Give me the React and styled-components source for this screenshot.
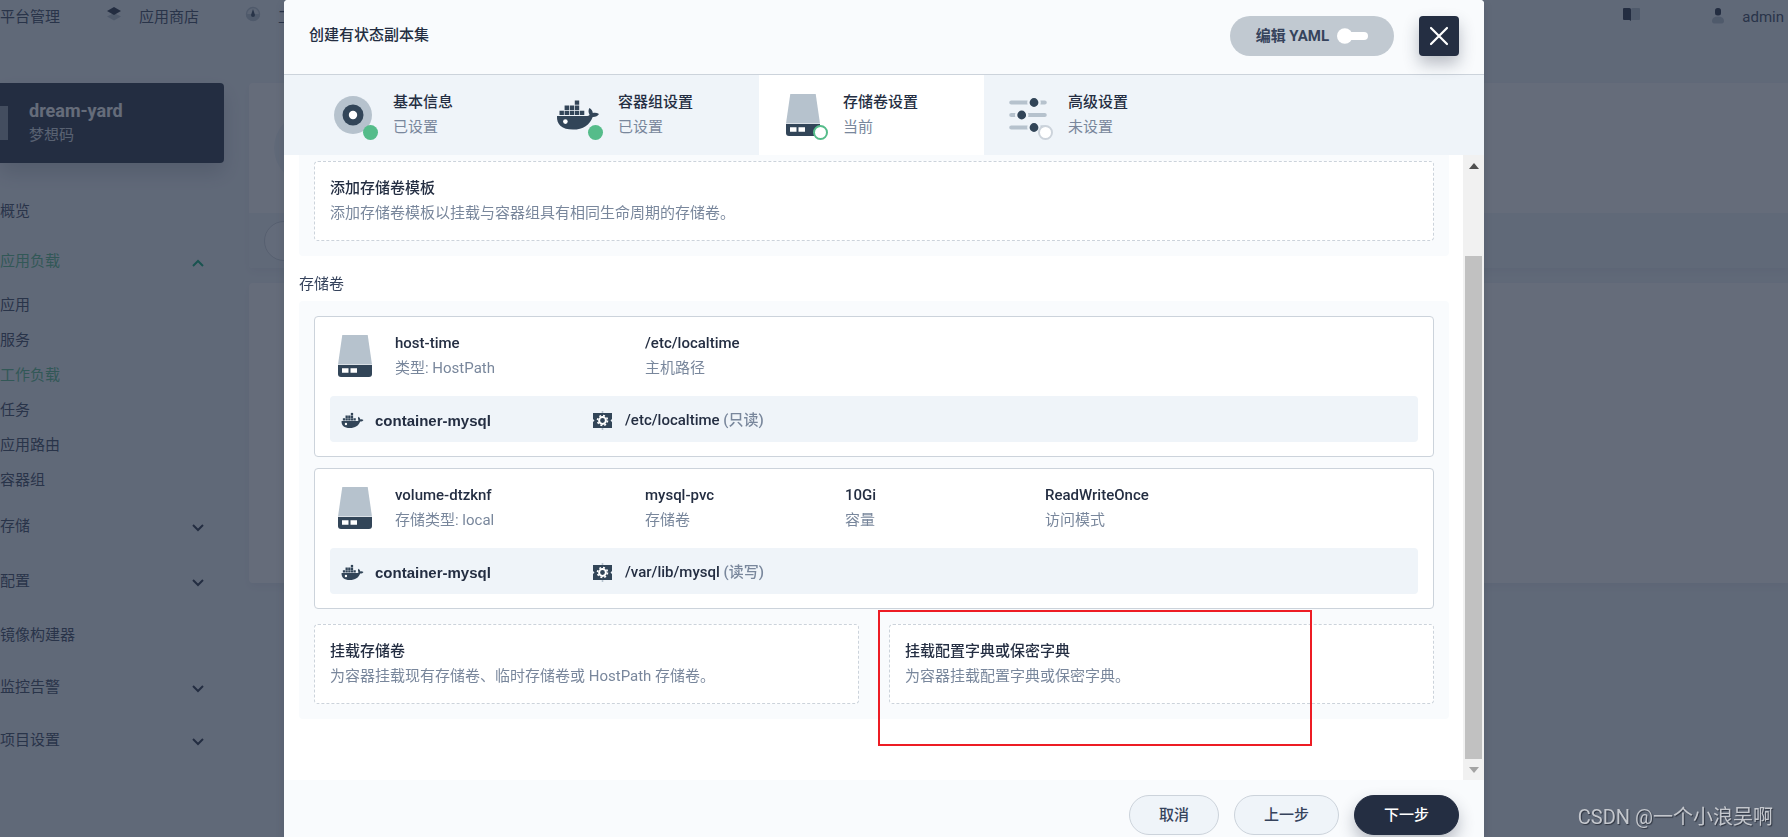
import React from 'react';
import styled, { createGlobalStyle, css } from 'styled-components';

const GlobalStyle = createGlobalStyle`
  * {
    box-sizing: border-box;
  }
  body {
    margin: 0;
    overflow: hidden;
    background: #eff4f9;
    color: #36435c;
    font-family: Roboto, "Noto Sans CJK SC", sans-serif;
    font-size: 15px;
    line-height: 25px;
  }
  button {
    font: inherit;
    color: inherit;
    border: 0;
    margin: 0;
    padding: 0;
    background: none;
    cursor: pointer;
  }
  a {
    color: inherit;
    text-decoration: none;
  }
  h2, h3, p {
    margin: 0;
    font-size: 15px;
  }
`

// PAGE BEHIND THE MODAL -------------------------------------------------------
const Page = styled.div`
  height: 100vh;
  overflow: hidden;
`

const TopNav = styled.nav`
  display: flex;
  align-items: flex-start;
  height: 57px;
  padding: 5px 4px 0 0;
`

const NavGroup = styled.div`
  display: flex;
  flex: ${props => props.$grow ? 1 : 'none'};
  gap: ${props => props.$gap}px;
`

const NavLink = styled.a`
  display: flex;
  gap: 17px;
  white-space: nowrap;

  svg {
    margin-top: 1px;
  }
`

const Shell = styled.div`
  display: flex;
  gap: 25px;
  padding-top: 26px;
`

const Sidebar = styled.aside`
  flex: none;
  width: 224px;
`

const Project = styled.div`
  display: flex;
  align-items: center;
  gap: 21px;
  height: 80px;
  margin-bottom: 23px;
  border-radius: 0 4px 4px 0;
  background: #242e42;
  box-shadow: 0 10px 20px rgba(36, 46, 66, 0.2);
  color: #ffffff;
`

const ProjectMark = styled.span`
  width: 8px;
  height: 34px;
  background: #8d96a3;
`

const ProjectName = styled.strong`
  display: block;
  font-size: 18px;
`

const ProjectAlias = styled.span`
  color: #d8dee5;
`

const MenuItem = styled.a`
  display: flex;
  align-items: center;
  justify-content: space-between;
  height: ${props => props.$height}px;
  padding-right: 20px;
  color: ${props => props.$active ? '#55bc8a' : '#36435c'};

  svg {
    margin-top: 3px;
  }
`

const SubMenu = styled.div`
  padding: 2px 0 1px;
`

const Main = styled.main`
  flex: 1;
`

const Panel = styled.section`
  height: ${props => props.$height}px;
  margin-bottom: 15px;
  overflow: hidden;
  border-radius: 4px 0 0 4px;
  background: #ffffff;
  box-shadow: 0 4px 8px rgba(36, 46, 66, 0.06);
`

const PanelHead = styled.div`
  display: flex;
  align-items: center;
  height: 130px;
  padding-left: 25px;
`

const PanelAvatar = styled.span`
  width: 72px;
  height: 72px;
  border-radius: 50%;
  background: #eff4f9;
`

const PanelBar = styled.div`
  display: flex;
  align-items: center;
  height: 55px;
  padding-left: 15px;
  background: #eff4f9;
`

const PanelPill = styled.span`
  width: 100px;
  height: 40px;
  border: 1px solid #ccd3db;
  border-radius: 20px;
  background: #f9fbfd;
`

// MODAL -----------------------------------------------------------------------
const Overlay = styled.div`
  position: fixed;
  inset: 0;
  display: flex;
  justify-content: center;
  padding-right: 20px;
  background: rgba(36, 46, 66, 0.7);
`

const Modal = styled.div`
  display: flex;
  flex-direction: column;
  width: 100%;
  max-width: 1200px;
  height: 100%;
  border-radius: 4px 4px 0 0;
  overflow: hidden;
  background: #ffffff;
  box-shadow: 0 4px 8px rgba(36, 46, 66, 0.2);
`

const Header = styled.header`
  display: flex;
  align-items: center;
  gap: 25px;
  flex: none;
  padding: 16px 25px 18px;
  border-bottom: 1px solid #ccd3db;
  background: #f9fbfd;
`

const Title = styled.h2`
  flex: 1;
  padding-bottom: 2px;
  color: #242e42;
  font-weight: 500;
`

const YamlButton = styled.button`
  display: flex;
  align-items: center;
  gap: 8px;
  height: 40px;
  padding: 0 26px;
  border-radius: 20px;
  background: #c1c9d1;
  font-weight: 700;
`

const CloseButton = styled.button`
  display: flex;
  align-items: center;
  justify-content: center;
  width: 40px;
  height: 40px;
  border-radius: 4px;
  background: #242e42;
  box-shadow: 0 8px 16px rgba(36, 46, 66, 0.3);
  z-index: 1;
`

const Steps = styled.div`
  display: flex;
  flex: none;
  padding: 0 25px;
  background: #eff4f9;
`

const Step = styled.button`
  display: flex;
  align-items: center;
  gap: 16px;
  width: 225px;
  height: 80px;
  padding: 0 20px;
  text-align: left;
  background: ${props => props.$current ? '#ffffff' : 'transparent'};
`

const StepIcon = styled.span`
  position: relative;
  display: flex;
`

const dotStyles = {
  done: css`background: #55bc8a;`,
  current: css`background: #ffffff; border: 2px solid #55bc8a;`,
  pending: css`background: #ffffff; border: 2px solid #ccd3db;`,
}

const StatusDot = styled.span`
  position: absolute;
  right: -1px;
  bottom: -1px;
  width: 15px;
  height: 15px;
  border-radius: 50%;
  ${props => dotStyles[props.$status]}
`

const Name = styled.strong`
  display: block;
  color: #242e42;
  font-weight: 500;
  white-space: nowrap;
`

const Desc = styled.span`
  display: block;
  color: #79879c;
  white-space: nowrap;
`

const Body = styled.div`
  display: flex;
  flex: 1;
  min-height: 0;
`

const Content = styled.div`
  flex: 1;
  overflow: hidden;
  padding: 0 14px 0 15px;
`

const Group = styled.section`
  display: flex;
  flex-direction: column;
  gap: 11px;
  padding: ${props => props.$cut ? '6px 15px 15px' : '15px'};
  border-radius: ${props => props.$cut ? '0 0 4px 4px' : '4px'};
  background: #f9fbfd;
`

const GroupTitle = styled.h3`
  margin: 16px 0 4px;
  font-weight: 400;
`

const AddRow = styled.div`
  display: flex;
  gap: 30px;
  padding-top: ${props => props.$spaced ? 4 : 0}px;
`

const AddBox = styled.button`
  position: relative;
  flex: 1;
  height: 80px;
  padding: 0 15px;
  border: 1px dashed #ccd3db;
  border-radius: 4px;
  background: #ffffff;
  text-align: left;
`

const Highlight = styled.span`
  position: absolute;
  top: -15px;
  left: -12px;
  width: 434px;
  height: 136px;
  border: 2px solid #ed1c24;
  pointer-events: none;
`

const VolumeCard = styled.article`
  padding: 14px 15px;
  border: 1px solid #ccd3db;
  border-radius: 4px;
  background: #ffffff;
`

const VolumeInfo = styled.div`
  display: flex;
  align-items: center;
  height: 50px;
  margin-bottom: 15px;

  svg {
    margin: 0 16px 0 1px;
  }
`

const Field = styled.div`
  width: ${props => props.$wide ? 250 : 200}px;
`

const MountRow = styled.div`
  display: flex;
  align-items: center;
  height: 46px;
  padding: 2px 10px 0;
  border-radius: 4px;
  background: #eff4f9;
`

const Mount = styled.div`
  display: flex;
  align-items: center;
  gap: 10px;
  width: 250px;
  color: #242e42;
  font-weight: 500;
  white-space: nowrap;

  em {
    color: #79879c;
    font-style: normal;
  }
`

const ContainerName = styled.span`
  font-family: "Liberation Sans", "Noto Sans CJK SC", sans-serif;
  font-weight: 700;
`

const ScrollBar = styled.div`
  display: flex;
  flex-direction: column;
  flex: none;
  width: 21px;
  padding: 0 2px;
  background: #f1f1f1;
`

const ScrollArrow = styled.span`
  display: flex;
  align-items: center;
  justify-content: center;
  height: 21px;
`

const ScrollThumb = styled.span`
  flex: 1;
  margin-top: ${props => props.$offset}px;
  background: #c1c1c1;
`

const Footer = styled.footer`
  display: flex;
  justify-content: flex-end;
  gap: 15px;
  flex: none;
  padding: 15px 25px 2px;
  background: #f9fbfd;
`

const FooterButton = styled.button`
  width: ${props => props.$wide ? 105 : 90}px;
  height: 40px;
  border: 1px solid ${props => props.$primary ? '#242e42' : '#ccd3db'};
  border-radius: 20px;
  background: ${props => props.$primary ? '#242e42' : '#eff4f9'};
  color: ${props => props.$primary ? '#ffffff' : '#36435c'};
  font-weight: 500;
  ${props => props.$primary && css`
    box-shadow: 0 8px 16px rgba(36, 46, 66, 0.3);
  `}
`

const Watermark = styled.span`
  position: fixed;
  right: 15px;
  bottom: 7px;
  color: #c4c7cd;
  font-size: 20px;
  text-shadow: 1px 1px 1px #2e3440;
`

// ICONS -----------------------------------------------------------------------
const DARK = '#324558';
const LIGHT = '#b6c2cd';

const DiscIcon = () => (
  <svg width="48" height="48" viewBox="0 0 48 48">
    <circle cx="24" cy="24" r="19" fill={LIGHT} />
    <circle cx="24" cy="24" r="10.5" fill={DARK} />
    <circle cx="24" cy="24" r="4.2" fill="#fff" />
  </svg>
)

const DockerIcon = ({ size = 48 }) => (
  <svg width={size} height={size} viewBox="0 0 48 48" fill={DARK}>
    <path d="M20.8 9.4h4.4v4.4h-4.4z" />
    <path d="M10.6 14.6H15V19h-4.4zM15.7 14.6h4.4V19h-4.4zM20.8 14.6h4.4V19h-4.4z" />
    <path d="M5.5 19.7h4.4v4.4H5.5zM10.6 19.7H15v4.4h-4.4zM15.7 19.7h4.4v4.4h-4.4zM20.8 19.7h4.4v4.4h-4.4zM25.9 19.7h4.4v4.4h-4.4z" />
    <path d="M3 25h30.5c1.3 0 2-.5 2-1.4-1.2-2-1.4-4.4-.1-6.6 2.2 1.3 3.2 3 3.4 5 2.2-.6 4.4-.2 6.2 1-1.2 2.2-3.4 3.1-6.3 3-2.9 8-9.5 12.6-19.7 12.6C8 38.6 2.4 33.6 3 25z" />
    <circle cx="11.4" cy="30.6" r="2.3" fill="#fff" />
  </svg>
)

const DiskIcon = () => (
  <svg width="48" height="48" viewBox="0 0 48 48">
    <path d="M11.3 3h25.4L41 32.5H7z" fill={LIGHT} />
    <path d="M7 33h34v9a3 3 0 0 1-3 3H10a3 3 0 0 1-3-3z" fill={DARK} />
    <path d="M11 36.3h6.5v4.4H11zM19.5 36.3H26v4.4h-6.5z" fill="#fff" />
  </svg>
)

const SlidersIcon = () => (
  <svg width="48" height="48" viewBox="0 0 48 48">
    <g stroke={LIGHT} strokeWidth="4.2" strokeLinecap="round">
      <path d="M7.3 11.5h33.4M7.3 24h33.4M7.3 36.5h33.4" />
    </g>
    <g fill={DARK} stroke="#eff4f9" strokeWidth="2.4">
      <circle cx="30" cy="11.5" r="5.6" />
      <circle cx="17.7" cy="24" r="5.6" />
      <circle cx="30" cy="36.5" r="5.6" />
    </g>
  </svg>
)

const MountIcon = () => (
  <svg width="25" height="25" viewBox="0 0 25 25">
    <path d="M12.5 3v19" stroke={LIGHT} strokeWidth="1.6" />
    <path d="M3 5h19v6l-1.5 1.5L22 14v6H3v-6l1.5-1.5L3 11z" fill={DARK} />
    <circle cx="12.5" cy="12.5" r="3.4" fill="none" stroke="#fff" strokeWidth="2" />
    <circle cx="12.5" cy="12.5" r="5" fill="none" stroke="#fff" strokeWidth="1.6" strokeDasharray="1.96 1.96" />
  </svg>
)

const CloseIcon = () => (
  <svg width="20" height="20" viewBox="0 0 20 20" stroke="#fff" strokeWidth="2.2" strokeLinecap="round">
    <path d="M2 2l16 16M18 2L2 18" />
  </svg>
)

const ToggleIcon = () => (
  <svg width="31" height="16" viewBox="0 0 31 16" fill="#fff">
    <rect x="8" y="4" width="23" height="8" rx="4" />
    <circle cx="7.8" cy="8" r="7.8" />
  </svg>
)

const ChevronIcon = ({ up }) => (
  <svg width="12" height="8" viewBox="0 0 12 8" fill="none" stroke={up ? '#00aa72' : '#242e42'} strokeWidth="2">
    <path d={up ? 'M1 7l5-5 5 5' : 'M1 1l5 5 5-5'} />
  </svg>
)

const LayersIcon = () => (
  <svg width="16" height="16" viewBox="0 0 16 16">
    <path d="M1 10.5L8 7l7 3.5-7 4z" fill={LIGHT} />
    <path d="M1 5l7-4 7 4-7 4z" fill="#242e42" />
  </svg>
)

const GaugeIcon = () => (
  <svg width="16" height="16" viewBox="0 0 16 16">
    <circle cx="8" cy="8" r="6.5" fill="#e3e9ef" stroke={LIGHT} strokeWidth="1.4" />
    <path d="M1 8h14a7 7 0 0 1-14 0z" fill={LIGHT} />
    <path d="M8 3l2 6a2 2 0 0 1-4 0z" fill={DARK} />
  </svg>
)

const BookIcon = () => (
  <svg width="19" height="16" viewBox="0 0 19 16">
    <path d="M9 3.5A1.5 1.5 0 0 1 10.500 2H17a1 1 0 0 1 1 1v10a1 1 0 0 1-1 1H9z" fill={LIGHT} />
    <path d="M1 3a1 1 0 0 1 1-1h5.500A1.500 1.500 0 0 1 9 3.500V15l-1.500-1H2a1 1 0 0 1-1-1z" fill="#242e42" />
  </svg>
)

const UserIcon = () => (
  <svg width="14" height="18" viewBox="0 0 14 18">
    <path d="M1 15c0-3 2-4.500 6-4.500s6 1.500 6 4.500c0 1.500-.8 2.500-2 2.500H3c-1.200 0-2-1-2-2.500z" fill={LIGHT} />
    <rect x="4" y="2" width="6" height="7.5" rx="2.5" fill="#242e42" />
  </svg>
)

// DATA ------------------------------------------------------------------------
const steps = [
  { name: '基本信息', desc: '已设置', status: 'done', icon: <DiscIcon /> },
  { name: '容器组设置', desc: '已设置', status: 'done', icon: <DockerIcon /> },
  { name: '存储卷设置', desc: '当前', status: 'current', icon: <DiskIcon /> },
  { name: '高级设置', desc: '未设置', status: 'pending', icon: <SlidersIcon /> },
];

const workloads = ['应用', '服务', '工作负载', '任务', '应用路由', '容器组'];

const menu = [
  { label: '存储', height: 55, group: true },
  { label: '配置', height: 55, group: true },
  { label: '镜像构建器', height: 52 },
  { label: '监控告警', height: 52, group: true },
  { label: '项目设置', height: 55, group: true },
];

const volumes = [
  {
    fields: [
      ['host-time', '类型: HostPath'],
      ['/etc/localtime', '主机路径'],
    ],
    container: 'container-mysql',
    path: '/etc/localtime',
    mode: '(只读)',
  },
  {
    fields: [
      ['volume-dtzknf', '存储类型: local'],
      ['mysql-pvc', '存储卷'],
      ['10Gi', '容量'],
      ['ReadWriteOnce', '访问模式'],
    ],
    container: 'container-mysql',
    path: '/var/lib/mysql',
    mode: '(读写)',
  },
];

function Volume({ volume }) {
  return (
    <VolumeCard>
      <VolumeInfo>
        <DiskIcon />
        {volume.fields.map(([name, desc], i) => (
          <Field key={name} $wide={i === 0}>
            <Name>{name}</Name>
            <Desc>{desc}</Desc>
          </Field>
        ))}
      </VolumeInfo>
      <MountRow>
        <Mount>
          <DockerIcon size={25} />
          <ContainerName>{volume.container}</ContainerName>
        </Mount>
        <Mount>
          <MountIcon />
          <span>{volume.path} <em>{volume.mode}</em></span>
        </Mount>
      </MountRow>
    </VolumeCard>
  )
}

function Background() {
  return (
    <Page>
      <TopNav>
        <NavGroup $gap={46} $grow>
          <NavLink href="#">平台管理</NavLink>
          <NavLink href="#"><LayersIcon />应用商店</NavLink>
          <NavLink href="#"><GaugeIcon />工作台</NavLink>
        </NavGroup>
        <NavGroup $gap={70}>
          <NavLink href="#" aria-label="docs"><BookIcon /></NavLink>
          <NavLink href="#"><UserIcon />admin</NavLink>
        </NavGroup>
      </TopNav>
      <Shell>
        <Sidebar>
          <Project>
            <ProjectMark />
            <div>
              <ProjectName>dream-yard</ProjectName>
              <ProjectAlias>梦想码</ProjectAlias>
            </div>
          </Project>
          <MenuItem href="#" $height={50}>概览</MenuItem>
          <MenuItem href="#" $height={50} $active>应用负载<ChevronIcon up /></MenuItem>
          <SubMenu>
            {workloads.map(label => (
              <MenuItem key={label} href="#" $height={35} $active={label === '工作负载'}>{label}</MenuItem>
            ))}
          </SubMenu>
          {menu.map(item => (
            <MenuItem key={item.label} href="#" $height={item.height}>
              {item.label}
              {item.group && <ChevronIcon />}
            </MenuItem>
          ))}
        </Sidebar>
        <Main>
          <Panel $height={185}>
            <PanelHead><PanelAvatar /></PanelHead>
            <PanelBar><PanelPill /></PanelBar>
          </Panel>
          <Panel $height={300} />
        </Main>
      </Shell>
    </Page>
  )
}

export default function App() {
  return (
    <>
      <GlobalStyle />
      <Background />
      <Overlay>
        <Modal role="dialog" aria-label="创建有状态副本集">
          <Header>
            <Title>创建有状态副本集</Title>
            <YamlButton type="button" role="switch" aria-checked="false">
              编辑 YAML
              <ToggleIcon />
            </YamlButton>
            <CloseButton type="button" aria-label="close"><CloseIcon /></CloseButton>
          </Header>
          <Steps>
            {steps.map(step => (
              <Step key={step.name} type="button" $current={step.status === 'current'}>
                <StepIcon>
                  {step.icon}
                  <StatusDot $status={step.status} />
                </StepIcon>
                <span>
                  <Name>{step.name}</Name>
                  <Desc>{step.desc}</Desc>
                </span>
              </Step>
            ))}
          </Steps>
          <Body>
            <Content>
              <Group $cut>
                <AddRow>
                  <AddBox type="button">
                    <Name>添加存储卷模板</Name>
                    <Desc>添加存储卷模板以挂载与容器组具有相同生命周期的存储卷。</Desc>
                  </AddBox>
                </AddRow>
              </Group>
              <GroupTitle>存储卷</GroupTitle>
              <Group>
                {volumes.map(volume => <Volume key={volume.path} volume={volume} />)}
                <AddRow $spaced>
                  <AddBox type="button">
                    <Name>挂载存储卷</Name>
                    <Desc>为容器挂载现有存储卷、临时存储卷或 HostPath 存储卷。</Desc>
                  </AddBox>
                  <AddBox type="button">
                    <Name>挂载配置字典或保密字典</Name>
                    <Desc>为容器挂载配置字典或保密字典。</Desc>
                    <Highlight />
                  </AddBox>
                </AddRow>
              </Group>
            </Content>
            <ScrollBar aria-hidden="true">
              <ScrollArrow>
                <svg width="10" height="6" viewBox="0 0 10 6"><path d="M0 6l5-6 5 6z" fill="#505050" /></svg>
              </ScrollArrow>
              <ScrollThumb $offset={80} />
              <ScrollArrow>
                <svg width="10" height="6" viewBox="0 0 10 6"><path d="M0 0l5 6 5-6z" fill="#a3a3a3" /></svg>
              </ScrollArrow>
            </ScrollBar>
          </Body>
          <Footer>
            <FooterButton type="button">取消</FooterButton>
            <FooterButton type="button" $wide>上一步</FooterButton>
            <FooterButton type="button" $wide $primary>下一步</FooterButton>
          </Footer>
        </Modal>
      </Overlay>
      <Watermark>CSDN @一个小浪吴啊</Watermark>
    </>
  )
}
